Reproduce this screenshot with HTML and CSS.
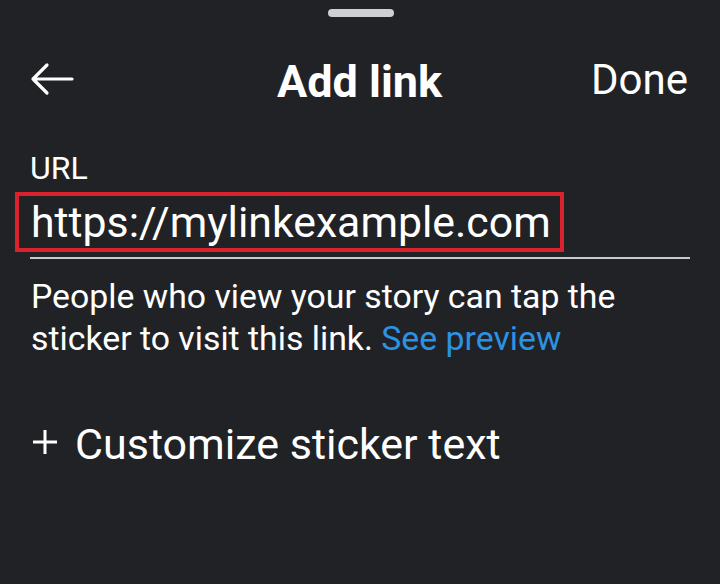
FILE: index.html
```html
<!DOCTYPE html>
<html lang="en">
<head>
<meta charset="utf-8">
<title>Add link</title>
<link rel="stylesheet" href="styles.css">
</head>
<body>
<div class="sheet">
  <div class="handle"></div>
  <header class="header">
    <div class="back">
      <svg class="back-icon" width="44" height="34" viewBox="0 0 44 34" aria-hidden="true">
        <path d="M42 17H3 M17 3 L3 17 L17 31" fill="none" stroke="#ffffff" stroke-width="3.2" stroke-linecap="round" stroke-linejoin="round"/>
      </svg>
    </div>
    <h1 class="title">Add link</h1>
    <div class="done">Done</div>
  </header>

  <div class="field">
    <div class="label">URL</div>
    <div class="input-row">
      <span class="url-box">https://mylinkexample.com</span>
    </div>
  </div>

  <p class="hint"><span class="hint-line">People who view your story can tap the</span><span>sticker to visit this link.</span> <a class="link" href="#">See preview</a></p>

  <div class="customize">
    <svg class="plus" width="26" height="26" viewBox="0 0 26 26" aria-hidden="true">
      <path d="M13 1V25 M1 13H25" fill="none" stroke="#ffffff" stroke-width="3"/>
    </svg>
    <span class="customize-text">Customize sticker text</span>
  </div>
</div>
</body>
</html>
```

FILE: styles.css
```css
html, body {
  margin: 0;
  padding: 0;
  background: #212226;
}

body {
  width: 720px;
  height: 584px;
  overflow: hidden;
  font-family: Roboto, "Noto Sans", sans-serif;
  color: #ffffff;
}

.sheet {
  padding: 9px 32px 0 31px;
}

.handle {
  width: 66px;
  height: 8px;
  border-radius: 4px;
  background: #cfd0d4;
  margin: 0 auto;
  position: relative;
  left: 1px;
}

.header {
  display: grid;
  grid-template-columns: 1fr auto 1fr;
  align-items: center;
  height: 84px;
  margin-top: 21px;
}

.back {
  display: flex;
  align-items: center;
}

.back-icon {
  display: block;
  margin-left: -1px;
  margin-top: -3px;
}

.title {
  margin: 0;
  font-size: 45px;
  line-height: 1;
  font-weight: 700;
  margin-top: 3px;
}

.done {
  justify-self: end;
  font-size: 42px;
  line-height: 1;
}

.field {
  margin-top: 27px;
  border-bottom: 2px solid #c9c9cb;
  padding-bottom: 5px;
  margin-right: -2px;
  margin-left: -1px;
}

.label {
  font-size: 32px;
  line-height: 38px;
}

.input-row {
  margin-top: 5px;
  margin-left: -15px;
}

.url-box {
  display: inline-block;
  border: 4px solid #d9222c;
  padding: 0 9px 0 12px;
  font-size: 42.8px;
  line-height: 52px;
  height: 52px;
}

.hint {
  margin: 17px 0 0;
  font-size: 33.8px;
  line-height: 42px;
}

.hint-line {
  display: block;
}

.link {
  color: #2b93e2;
  text-decoration: none;
}

.customize {
  display: flex;
  align-items: center;
  margin-top: 59px;
  height: 50px;
}

.plus {
  display: block;
  margin-left: 1px;
  margin-top: -4px;
}

.customize-text {
  font-size: 43px;
  line-height: 50px;
  margin-left: 17px;
}
```
